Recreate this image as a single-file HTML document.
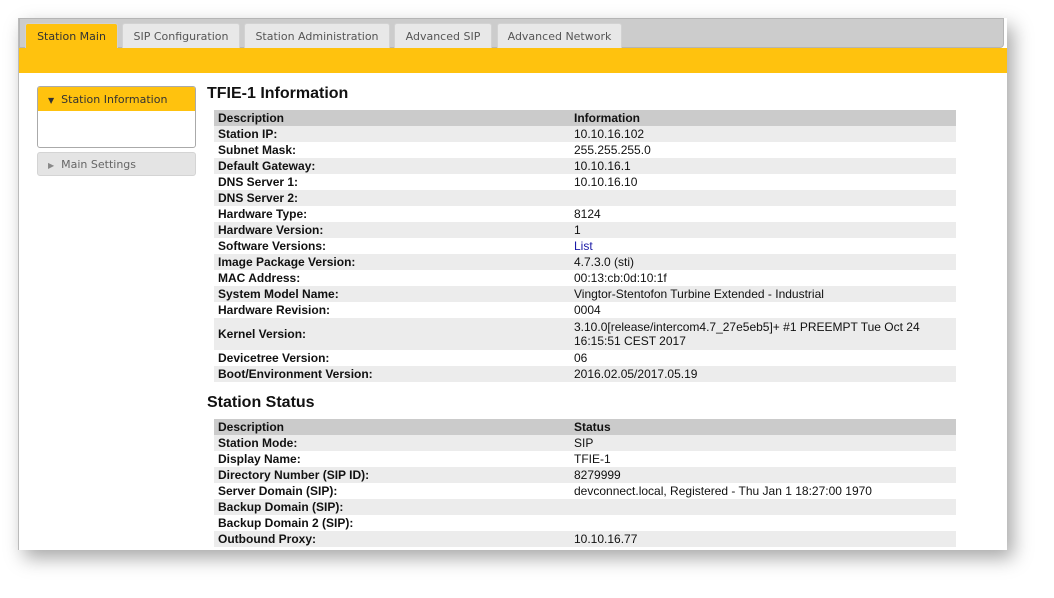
<!DOCTYPE html>
<html><head><style>
body{margin:0;width:1054px;height:598px;background:#fff;font-family:"Liberation Sans",Arial,sans-serif;position:relative;overflow:hidden}
.frame{position:absolute;left:18px;top:18px;width:988px;height:532px;background:#fff;box-shadow:6px 8px 18px rgba(0,0,0,.35);border-left:1px solid #bbb}
.tabbar{position:absolute;left:0;top:0;width:985px;height:30px;background:#ccc;border:1px solid #b5b5b5;border-radius:0 0 4px 0;box-sizing:border-box}
.tab{position:absolute;top:5px;height:25px;background:#e8e8e8;border:1px solid #d2d2d2;border-bottom:none;border-radius:3px 3px 0 0;color:#555;line-height:25px;text-align:center;box-sizing:border-box;font-family:"DejaVu Sans",sans-serif;font-size:11px}
.tab.on{background:#ffc20e;color:#333;height:26px}
.yel{position:absolute;left:0;top:30px;width:988px;height:25px;background:#ffc20e}
.side1{position:absolute;left:18px;top:68px;width:159px;height:62px;border:1px solid #aaa;border-radius:3px;box-sizing:border-box;overflow:hidden}
.side1 .h{background:#ffc20e;height:24px;line-height:26px;font-family:"DejaVu Sans",sans-serif;font-size:11px;color:#333;padding-left:10px}
.side2{position:absolute;left:18px;top:134px;width:159px;height:24px;background:#e4e4e4;border:1px solid #d4d4d4;border-radius:3px;box-sizing:border-box;line-height:23px;font-family:"DejaVu Sans",sans-serif;font-size:11px;color:#666;padding-left:10px}
h2{position:absolute;left:188px;margin:0;font-size:16px;font-weight:bold;color:#111}
table{position:absolute;left:195px;width:742px;border-collapse:collapse;font-size:12px;color:#111}
td{height:16px;padding:0 4px;line-height:14px;vertical-align:middle}
td:first-child{font-weight:bold;width:348px}
tr:nth-child(even){background:#ececec}
tr.hd{background:#cbcbcb;font-weight:bold}
tr.hd td{font-weight:bold}
a{color:#1a1aa6;text-decoration:none}
</style></head><body>
<div class="frame">
<div class="tabbar"></div>
<div class="tab on" style="left:6px;width:93px">Station Main</div>
<div class="tab" style="left:103px;width:118px">SIP Configuration</div>
<div class="tab" style="left:225px;width:146px">Station Administration</div>
<div class="tab" style="left:375px;width:98px">Advanced SIP</div>
<div class="tab" style="left:478px;width:125px">Advanced Network</div>
<div class="yel"></div>
<div class="side1"><div class="h"><span style="font-size:8px">▼</span>&nbsp; Station Information</div></div>
<div class="side2"><span style="font-size:8px;color:#888">▶</span>&nbsp; Main Settings</div>
<h2 style="top:67px">TFIE-1 Information</h2>
<table style="top:92px">
<tr class="hd"><td>Description</td><td>Information</td></tr>
<tr><td>Station IP:</td><td>10.10.16.102</td></tr>
<tr><td>Subnet Mask:</td><td>255.255.255.0</td></tr>
<tr><td>Default Gateway:</td><td>10.10.16.1</td></tr>
<tr><td>DNS Server 1:</td><td>10.10.16.10</td></tr>
<tr><td>DNS Server 2:</td><td></td></tr>
<tr><td>Hardware Type:</td><td>8124</td></tr>
<tr><td>Hardware Version:</td><td>1</td></tr>
<tr><td>Software Versions:</td><td><a>List</a></td></tr>
<tr><td>Image Package Version:</td><td>4.7.3.0 (sti)</td></tr>
<tr><td>MAC Address:</td><td>00:13:cb:0d:10:1f</td></tr>
<tr><td>System Model Name:</td><td>Vingtor-Stentofon Turbine Extended - Industrial</td></tr>
<tr><td>Hardware Revision:</td><td>0004</td></tr>
<tr><td style="height:32px">Kernel Version:</td><td>3.10.0[release/intercom4.7_27e5eb5]+ #1 PREEMPT Tue Oct 24 16:15:51 CEST 2017</td></tr>
<tr><td>Devicetree Version:</td><td>06</td></tr>
<tr><td>Boot/Environment Version:</td><td>2016.02.05/2017.05.19</td></tr>
</table>
<h2 style="top:376px">Station Status</h2>
<table style="top:401px">
<tr class="hd"><td>Description</td><td>Status</td></tr>
<tr><td>Station Mode:</td><td>SIP</td></tr>
<tr><td>Display Name:</td><td>TFIE-1</td></tr>
<tr><td>Directory Number (SIP ID):</td><td>8279999</td></tr>
<tr><td>Server Domain (SIP):</td><td>devconnect.local, Registered - Thu Jan 1 18:27:00 1970</td></tr>
<tr><td>Backup Domain (SIP):</td><td></td></tr>
<tr><td>Backup Domain 2 (SIP):</td><td></td></tr>
<tr><td>Outbound Proxy:</td><td>10.10.16.77</td></tr>
</table>
</div>
</body></html>
